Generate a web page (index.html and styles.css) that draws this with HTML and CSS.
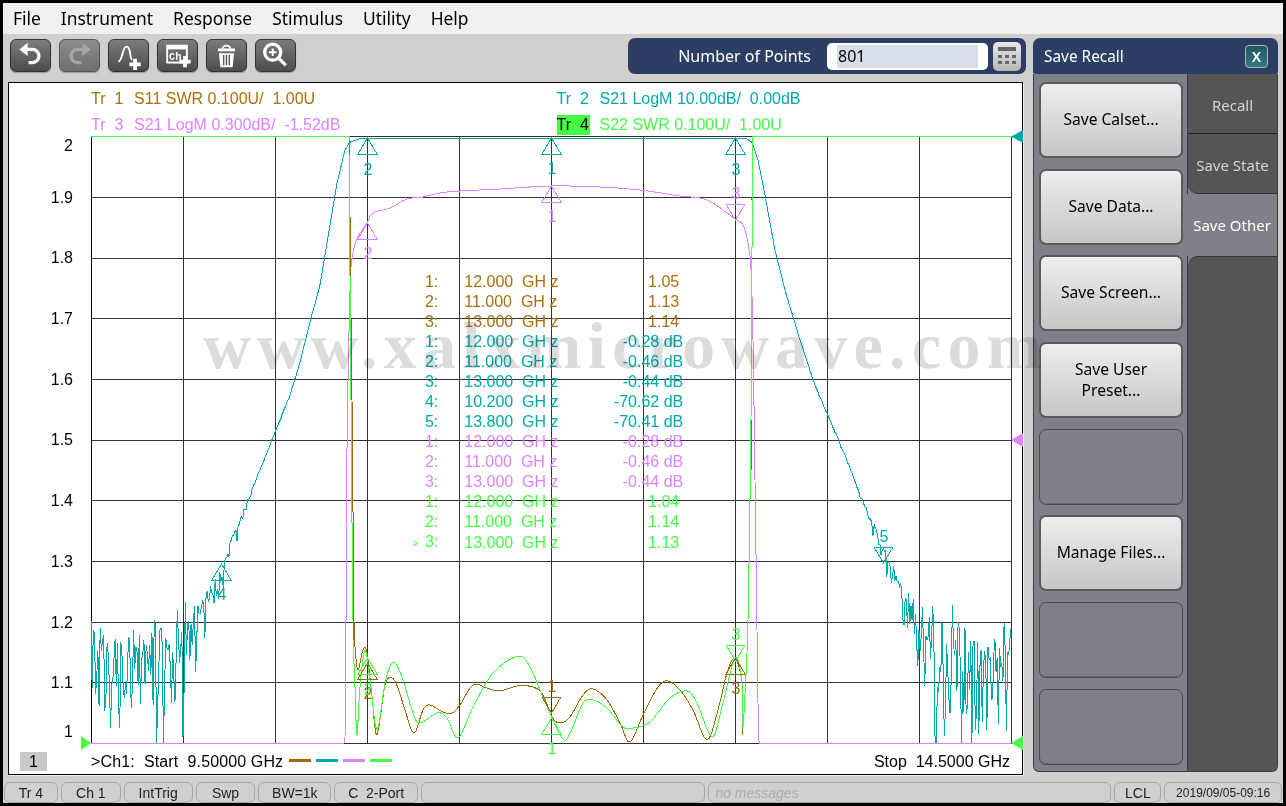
FILE: index.html
```html
<!DOCTYPE html>
<html lang="en">
<head>
    <meta charset="UTF-8">
    <title>Network Analyzer</title>
    <link rel="stylesheet" href="styles.css">
</head>
<body>
    <div class="app">
        <div class="menu">
            <span>File</span>
            <span>Instrument</span>
            <span>Response</span>
            <span>Stimulus</span>
            <span>Utility</span>
            <span>Help</span>
        </div>

        <div class="main">
            <div class="left">
                <div class="toolbar">
                    <div class="tools">
                        <button class="tool">
                            <svg viewBox="0 0 40 33"><path d="M15 10h7a6.5 6.5 0 0 1 0 14h-4" class="ico-line"/><path d="M17 3v14l-9-7z" class="ico-fill"/></svg>
                        </button>
                        <button class="tool off">
                            <svg viewBox="0 0 40 33"><path d="M25 10h-7a6.5 6.5 0 0 0 0 14h4" class="ico-line"/><path d="M23 3v14l9-7z" class="ico-fill"/></svg>
                        </button>
                        <button class="tool">
                            <svg viewBox="0 0 40 33"><path d="M9 23c5 0 4-16 9-16s3 14 6 14" class="ico-thin"/><path d="M25 20h4v4h4v4h-4v4h-4v-4h-4v-4h4z" class="ico-fill"/></svg>
                        </button>
                        <button class="tool">
                            <svg viewBox="0 0 40 33"><path d="M9 6h21v18H9z" class="ico-thin"/><path d="M9 6h21v4H9z" class="ico-fill"/><text x="11" y="21" class="ico-text">Ch</text><path d="M26 17h4v4h4v4h-4v4h-4v-4h-4v-4h4z" class="ico-fill"/></svg>
                        </button>
                        <button class="tool">
                            <svg viewBox="0 0 40 33"><path d="M11 9h18v3H11z" class="ico-fill"/><path d="M16 9a4 3 0 0 1 8 0" class="ico-thin"/><path d="M12 14h16l-1.5 15h-13z" class="ico-fill"/><path d="M17 16v11M20 16v11M23 16v11" class="ico-dark"/></svg>
                        </button>
                        <button class="tool">
                            <svg viewBox="0 0 40 33"><circle cx="17" cy="13" r="8.5" class="ico-line"/><path d="M13 13h8M17 9v8" class="ico-thin"/><path d="M23 19l8 8" class="ico-line"/></svg>
                        </button>
                    </div>
                    <div class="entry">
                        <span class="entry-label">Number of Points</span>
                        <div class="entry-box"><span class="entry-value">801</span></div>
                        <button class="calc">
                            <svg viewBox="0 0 28 29"><path d="M5 5h18v4H5z" class="key-bar"/><path d="M5 13h4v3H5zM12 13h4v3h-4zM19 13h4v3h-4zM5 19h4v3H5zM12 19h4v3h-4zM19 19h4v3h-4z" class="key-bar"/></svg>
                        </button>
                    </div>
                </div>

                <div class="plot">
                    <div class="legend">
                        <div class="legend-row">
                            <span class="legend-cell brown"><span class="tr">Tr&nbsp;&nbsp;1</span>S11 SWR 0.100U/&nbsp;&nbsp;1.00U</span>
                            <span class="legend-cell teal"><span class="tr">Tr&nbsp;&nbsp;2</span>S21 LogM 10.00dB/&nbsp;&nbsp;0.00dB</span>
                        </div>
                        <div class="legend-row">
                            <span class="legend-cell pink"><span class="tr">Tr&nbsp;&nbsp;3</span>S21 LogM 0.300dB/&nbsp;&nbsp;-1.52dB</span>
                            <span class="legend-cell green"><span class="tr active">Tr&nbsp;&nbsp;4</span>S22 SWR 0.100U/&nbsp;&nbsp;1.00U</span>
                        </div>
                    </div>

                    <svg id="chart" class="chart" viewBox="9 135 1013 615"></svg>

                    <table class="markers">
                        <tr class="brown"><td>1:</td><td>12.000&nbsp;&nbsp;GH z</td><td class="plain">1.05</td></tr>
                        <tr class="brown"><td>2:</td><td>11.000&nbsp;&nbsp;GH z</td><td class="plain">1.13</td></tr>
                        <tr class="brown"><td>3:</td><td>13.000&nbsp;&nbsp;GH z</td><td class="plain">1.14</td></tr>
                        <tr class="teal"><td>1:</td><td>12.000&nbsp;&nbsp;GH z</td><td>-0.28 dB</td></tr>
                        <tr class="teal"><td>2:</td><td>11.000&nbsp;&nbsp;GH z</td><td>-0.46 dB</td></tr>
                        <tr class="teal"><td>3:</td><td>13.000&nbsp;&nbsp;GH z</td><td>-0.44 dB</td></tr>
                        <tr class="teal"><td>4:</td><td>10.200&nbsp;&nbsp;GH z</td><td>-70.62 dB</td></tr>
                        <tr class="teal"><td>5:</td><td>13.800&nbsp;&nbsp;GH z</td><td>-70.41 dB</td></tr>
                        <tr class="pink"><td>1:</td><td>12.000&nbsp;&nbsp;GH z</td><td>-0.28 dB</td></tr>
                        <tr class="pink"><td>2:</td><td>11.000&nbsp;&nbsp;GH z</td><td>-0.46 dB</td></tr>
                        <tr class="pink"><td>3:</td><td>13.000&nbsp;&nbsp;GH z</td><td>-0.44 dB</td></tr>
                        <tr class="green"><td>1:</td><td>12.000&nbsp;&nbsp;GH z</td><td class="plain">1.04</td></tr>
                        <tr class="green"><td>2:</td><td>11.000&nbsp;&nbsp;GH z</td><td class="plain">1.14</td></tr>
                        <tr class="green"><td><small>&gt;</small> 3:</td><td>13.000&nbsp;&nbsp;GH z</td><td class="plain">1.13</td></tr>
                    </table>

                    <div class="plot-foot">
                        <span class="ch-num">1</span>
                        <span class="start">&gt;Ch1:&nbsp;&nbsp;Start&nbsp;&nbsp;9.50000 GHz</span>
                        <span class="dashes">
                            <i class="dash bg-brown"></i>
                            <i class="dash bg-teal"></i>
                            <i class="dash bg-pink"></i>
                            <i class="dash bg-green"></i>
                        </span>
                        <span class="stop">Stop&nbsp;&nbsp;14.5000 GHz</span>
                    </div>
                </div>
            </div>

            <div class="side">
                <div class="side-title">
                    <span>Save Recall</span>
                    <button class="close">X</button>
                </div>
                <div class="side-body">
                    <div class="softkeys">
                        <button class="key">Save Calset...</button>
                        <button class="key">Save Data...</button>
                        <button class="key">Save Screen...</button>
                        <button class="key">Save User<br>Preset...</button>
                        <button class="key blank"></button>
                        <button class="key">Manage Files...</button>
                        <button class="key blank"></button>
                        <button class="key blank"></button>
                    </div>
                    <div class="tabs">
                        <div class="tab first">Recall</div>
                        <div class="tab before-active">Save State</div>
                        <div class="tab active">Save Other</div>
                        <div class="tab rest"></div>
                    </div>
                </div>
            </div>
        </div>

        <div class="status">
            <span class="st st-tr">Tr 4</span>
            <span class="st st-ch">Ch 1</span>
            <span class="st st-trig">IntTrig</span>
            <span class="st st-swp">Swp</span>
            <span class="st st-bw">BW=1k</span>
            <span class="st st-port">C&nbsp;&nbsp;2-Port</span>
            <span class="st st-blank"></span>
            <span class="st st-msg">no messages</span>
            <span class="st st-lcl">LCL</span>
            <span class="st st-date">2019/09/05-09:16</span>
        </div>

        <div class="watermark">www.xalxmicrowave.com</div>
    </div>

    <script src="chart.js"></script>
</body>
</html>
```

FILE: styles.css
```css
* {
    box-sizing: border-box;
}

body {
    margin: 0;
    background: #000;
    font-family: 'Liberation Sans', sans-serif;
    overflow: hidden;
}

.app {
    position: relative;
    width: 1280px;
    height: 800px;
    margin: 3px;
    background: #d0d0d0;
    display: flex;
    flex-direction: column;
}

/* Menu */
.menu {
    height: 31px;
    padding: 0 0 2px 10px;
    background: #f0f0f0;
    display: flex;
    align-items: center;
    gap: 20px;
    font-family: 'Noto Sans', sans-serif;
    font-size: 17.4px;
    color: #000;
}

.main {
    flex: 1;
    display: flex;
    min-height: 0;
}

.left {
    width: 1030px;
    padding: 4px 0 0 5px;
}

/* Toolbar */
.toolbar {
    display: flex;
    justify-content: space-between;
    height: 36px;
    margin-bottom: 8px;
    padding-right: 7px;
}

.tools {
    display: flex;
    gap: 8px;
    padding: 1px 0 2px 2px;
}

.tool {
    width: 41px;
    padding: 0;
    border: 1px solid #333;
    border-radius: 6px;
    background: linear-gradient(#7c7c7c, #4c4c4c);
    box-shadow: 0 1px 1px #999;
}

.tool svg {
    display: block;
    width: 39px;
    height: 31px;
}

.tool.off {
    background: linear-gradient(#8c8c8c, #6e6e6e);
    border-color: #555;
}

.ico-line {
    fill: none;
    stroke: #fff;
    stroke-width: 3.5;
}

.ico-thin {
    fill: none;
    stroke: #fff;
    stroke-width: 2;
}

.ico-fill {
    fill: #fff;
}

.ico-dark {
    fill: none;
    stroke: #555;
    stroke-width: 1.5;
}

.ico-text {
    fill: #fff;
    font-family: 'Liberation Mono', monospace;
    font-size: 11px;
    font-weight: bold;
}

.off .ico-line {
    stroke: #a6a6a6;
}

.off .ico-fill {
    fill: #a6a6a6;
}

.entry {
    width: 398px;
    background: #2c3e63;
    border-radius: 7px;
    display: flex;
    align-items: center;
    padding-right: 4px;
}

.entry-label {
    width: 199px;
    padding-right: 16px;
    text-align: right;
    color: #fff;
    font-family: 'Noto Sans', sans-serif;
    font-size: 16px;
    white-space: nowrap;
}

.entry-box {
    width: 161px;
    height: 27px;
    margin-right: 5px;
    padding: 2px 10px;
    background: #fff;
    border-radius: 5px;
}

.entry-value {
    display: block;
    height: 23px;
    line-height: 23px;
    padding-left: 1px;
    background: #d8dee9;
    font-family: 'Noto Sans', sans-serif;
    font-size: 16px;
}

.calc {
    width: 28px;
    height: 29px;
    padding: 0;
    border: 0;
    border-radius: 5px;
    background: linear-gradient(#e8e8e8, #b8b8b8);
}

.calc svg {
    display: block;
}

.key-bar {
    fill: #666;
}

/* Plot */
.plot {
    position: relative;
    width: 1015px;
    height: 693px;
    background: #fff;
    border: 1px solid #000;
    box-shadow: 1px 1px 0 #eee;
}

.legend {
    height: 52px;
    padding: 3px 0 0 82px;
    font-size: 16px;
}

.legend-row {
    display: flex;
    height: 26px;
    align-items: center;
}

.legend-cell {
    width: 466px;
    white-space: nowrap;
}

.tr {
    display: inline-block;
    width: 43px;
}

.legend-cell .tr.active {
    width: 33px;
    margin-right: 10px;
    background: #44ff44;
    color: #000;
    line-height: 20px;
}

.brown { color: #a8700c; }
.teal { color: #00a9a9; }
.pink { color: #de82ff; }
.green { color: #44ff44; }
.bg-brown { background: #a06800; }
.bg-teal { background: #00a9a9; }
.bg-pink { background: #de82ff; }
.bg-green { background: #44ff44; }

.chart {
    display: block;
    width: 1013px;
    height: 615px;
    overflow: visible;
}

.chart text {
    font-family: 'Liberation Sans', sans-serif;
    font-size: 16px;
}

.markers {
    position: absolute;
    left: 403px;
    top: 189px;
    border-collapse: collapse;
    font-size: 16px;
    white-space: nowrap;
}

.markers td {
    height: 20px;
    padding: 0;
    line-height: 20px;
}

.markers td:nth-child(1) {
    width: 26px;
    text-align: right;
}

.markers td:nth-child(2) {
    width: 140px;
    padding-left: 26px;
}

.markers td:nth-child(3) {
    width: 105px;
    text-align: right;
}

.markers td.plain {
    padding-right: 4px;
}

.markers small {
    font-size: 11px;
    margin-right: 2px;
}

.plot-foot {
    position: relative;
    height: 24px;
    font-size: 16px;
    display: flex;
    align-items: center;
    color: #000;
}

.ch-num {
    width: 27px;
    height: 19px;
    margin-left: 11px;
    margin-top: -2px;
    background: #c8c8c8;
    text-align: center;
    line-height: 19px;
}

.start {
    margin-left: 44px;
    letter-spacing: 0.13px;
}

.dashes {
    display: flex;
    gap: 5px;
    margin-left: 6px;
    margin-top: -3px;
}

.dash {
    display: block;
    width: 22px;
    height: 3px;
}

.stop {
    margin-left: auto;
    margin-right: 12px;
}

/* Side panel */
.side {
    width: 245px;
    height: 734px;
    margin-top: 4px;
    display: flex;
    flex-direction: column;
}

.side-title {
    height: 36px;
    background: #2c3e63;
    border-radius: 7px 7px 2px 2px;
    display: flex;
    align-items: center;
    justify-content: space-between;
    padding: 1px 10px 0 11px;
    color: #fff;
    font-family: 'Noto Sans', sans-serif;
    font-size: 15.4px;
}

.close {
    width: 23px;
    height: 23px;
    padding: 0;
    border: 1px solid #aeb8c0;
    border-radius: 4px;
    background: linear-gradient(#1f5a64, #35797f);
    color: #fff;
    font-family: 'Liberation Sans', sans-serif;
    font-size: 14px;
    font-weight: bold;
}

.side-body {
    flex: 1;
    display: flex;
    background: #80808a;
    border: 1px solid #3c3c3c;
    border-top: 0;
    border-radius: 0 0 6px 6px;
    overflow: hidden;
}

.softkeys {
    width: 153px;
    padding: 8px 4px 0 5px;
    display: flex;
    flex-direction: column;
    gap: 10.7px;
}

.key {
    height: 76px;
    padding: 0 0 1px;
    border: 2px solid #5a5a5a;
    border-radius: 7px;
    background: linear-gradient(#eeeef0, #c6c6c9);
    color: #000;
    font-family: 'Noto Sans', sans-serif;
    font-size: 15.6px;
    line-height: 21px;
}

.key.blank {
    background: #80808a;
    border-color: #4c4c4c;
    border-width: 1px;
    box-shadow: inset 0 -1px 0 #6c6c74;
}

.tabs {
    flex: 1;
    display: flex;
    flex-direction: column;
    border-left: 1px solid #3c3c3c;
    color: #d4d4d4;
    font-family: 'Noto Sans', sans-serif;
    font-size: 15px;
    text-align: center;
}

.tab {
    height: 60px;
    line-height: 62px;
    background: #555;
}

.tab.first {
    border-bottom: 1px solid #222;
}

.tab.before-active {
    border-bottom: 1px solid #333;
    border-bottom-left-radius: 10px;
}

.tab.active {
    margin-left: -1px;
    background: #80808a;
    color: #fff;
    height: 62px;
}

.tab.rest {
    flex: 1;
    border-top: 1px solid #333;
    border-top-left-radius: 10px;
}

/* Status bar */
.status {
    height: 25px;
    padding: 4px 1px 0;
    display: flex;
    gap: 3px;
    font-size: 14px;
}

.st {
    display: flex;
    align-items: center;
    justify-content: center;
    border: 1px solid #a8a8a8;
    border-radius: 6px;
    color: #222;
}

.st-tr { width: 54px; }
.st-ch { width: 60px; }
.st-trig { width: 69px; }
.st-swp { width: 60px; }
.st-bw { width: 73px; }
.st-port { width: 84px; }
.st-blank { width: 285px; }
.st-msg {
    width: 404px;
    justify-content: flex-start;
    padding-left: 6px;
    color: #aaa;
    font-style: italic;
}
.st-lcl { width: 47px; }
.st-date { width: 118px; font-size: 12px; }

.watermark {
    position: absolute;
    left: 200px;
    top: 305px;
    color: #dcdcdc;
    mix-blend-mode: multiply;
    font-family: 'Liberation Serif', serif;
    font-size: 66px;
    font-weight: bold;
    letter-spacing: 6.25px;
    white-space: nowrap;
    pointer-events: none;
}
```

FILE: chart.js
```js
// draws the grid, traces and markers. coordinates are page pixels
const BROWN = '#a06800', TEAL = '#00a9a9', PINK = '#de82ff', GREEN = '#44ff44';
const svg = document.getElementById('chart');
const NS = 'http://www.w3.org/2000/svg';

function add(tag, attrs, text) {
    const el = document.createElementNS(NS, tag);
    for (const k in attrs) el.setAttribute(k, attrs[k]);
    if (text) el.textContent = text;
    svg.appendChild(el);
    return el;
}

function line(x1, y1, x2, y2, color) {
    add('line', { x1, y1, x2, y2, stroke: color, 'shape-rendering': 'crispEdges' });
}

function poly(points, color) {
    add('polyline', {
        points: points.map(p => p.join(',')).join(' '),
        fill: 'none',
        stroke: color,
        'shape-rendering': 'crispEdges'
    });
}

// smooth a list of points into a denser one
function smooth(pts) {
    const out = [];
    for (let i = 0; i < pts.length - 1; i++) {
        const p0 = pts[Math.max(i - 1, 0)], p1 = pts[i], p2 = pts[i + 1], p3 = pts[Math.min(i + 2, pts.length - 1)];
        for (let t = 0; t < 1; t += 0.2) {
            const t2 = t * t, t3 = t2 * t;
            out.push([0, 1].map(a => 0.5 * (2 * p1[a] + (p2[a] - p0[a]) * t +
                (2 * p0[a] - 5 * p1[a] + 4 * p2[a] - p3[a]) * t2 +
                (3 * p1[a] - p0[a] - 3 * p2[a] + p3[a]) * t3)));
        }
    }
    out.push(pts[pts.length - 1]);
    return out;
}

function interp(pts, x) {
    for (let i = 0; i < pts.length - 1; i++) {
        if (x <= pts[i + 1][0]) {
            const f = (x - pts[i][0]) / (pts[i + 1][0] - pts[i][0]);
            return pts[i][1] + f * (pts[i + 1][1] - pts[i][1]);
        }
    }
    return pts[pts.length - 1][1];
}

let seed = 71;
function rnd() {
    seed = (seed * 16807) % 2147483647;
    return seed / 2147483647;
}

// log trace: the dips reach further than the peaks, a few go very deep
function noise() {
    const n = (rnd() + rnd() - 1) * 2;
    if (rnd() < 0.05) return 2 + rnd() * 3;
    return n > 0 ? n * 1.9 : n;
}

// grid
const gridX = [91, 183, 275, 367, 459, 551, 643, 735, 827, 919, 1011];
const gridY = [136, 197, 258, 318, 379, 440, 500, 561, 622, 682, 743];
gridX.forEach(x => line(x + 0.5, 136, x + 0.5, 743, '#333'));
gridY.forEach(y => line(91, y + 0.5, 1012, y + 0.5, '#333'));
line(91.5, 136, 91.5, 743, '#000');

// y axis
const yLabels = ['2', '1.9', '1.8', '1.7', '1.6', '1.5', '1.4', '1.3', '1.2', '1.1', '1'];
const yLabelBase = [151, 203, 263, 324, 385, 445, 506, 567, 628, 688, 737];
yLabels.forEach((t, i) => {
    add('text', { x: 73, y: yLabelBase[i], 'text-anchor': 'end', fill: '#000' }, t);
});

// S21 wide, teal
const tealMid = [[91, 652], [130, 655], [175, 650], [195, 622], [212, 592], [222, 568], [240, 520], [260, 470],
    [275, 432], [290, 395], [300, 362], [310, 322], [320, 285], [330, 225], [337, 183], [345, 150], [350, 142],
    [362, 138], [745, 138], [752, 142], [758, 160], [765, 195], [775, 250], [785, 290], [800, 340], [815, 385],
    [830, 420], [845, 455], [860, 495], [875, 530], [884, 553], [897, 585], [915, 620], [935, 650], [1011, 665]];
const tealAmp = [[91, 24], [175, 26], [195, 12], [222, 6], [240, 2], [260, 0.5], [350, 0], [750, 0], [860, 0.5],
    [875, 2.5], [890, 6], [915, 12], [940, 26], [1011, 26]];
const teal = [];
for (let x = 91; x <= 1011; x += 1.15) {
    const y = interp(tealMid, x) + noise() * interp(tealAmp, x);
    teal.push([x, Math.min(743, y)]);
}
poly(teal, TEAL);

// S21 zoomed, pink
poly(smooth([[345.5, 680], [346, 623], [347, 450], [350, 290], [353, 253],
    [358, 237], [367, 223], [373, 213], [390, 208], [407, 199], [423, 197], [440, 193], [460, 191], [500, 189],
    [551, 186], [600, 187], [640, 190], [680, 196], [700, 198], [713, 203], [727, 213], [735, 219], [743, 225],
    [748, 243], [751, 270], [753, 340], [755, 480], [757, 630]]), PINK);
poly([[91, 743.5], [344, 743.5], [345, 738], [345.5, 680]], PINK);
poly([[757, 630], [758.5, 738], [759.5, 743.5], [1011, 743.5]], PINK);

// S11, brown
const brown = [[349, 140], [350, 240], [352, 400], [354, 620], [355, 647], [358, 670], [363, 650], [367, 653], [372, 697],
    [377, 735], [385, 685], [392, 678], [398, 688], [405, 710], [414, 733], [423, 710], [430, 705], [443, 712],
    [452, 713], [460, 705], [473, 685], [487, 688], [500, 691], [517, 686], [533, 687], [543, 695], [552, 717],
    [560, 723], [570, 717], [583, 695], [593, 689], [607, 700], [620, 723], [630, 742], [643, 715], [658, 687],
    [668, 681], [680, 690], [693, 710], [707, 740], [718, 710], [727, 673], [735, 658], [742, 683], [743, 735]];
poly(smooth(brown), BROWN);

// S22, green
const green = [[349.5, 136.5], [349.5, 200], [351, 400], [353, 620], [355, 687], [357, 735], [360, 687], [365, 650],
    [370, 680], [377, 730], [385, 683], [393, 662], [402, 677], [413, 713], [420, 723], [437, 713], [447, 718],
    [458, 738], [473, 707], [493, 673], [518, 656], [530, 667], [543, 697], [562, 738], [570, 733], [583, 703],
    [593, 700], [607, 708], [623, 727], [633, 728], [650, 722], [670, 698], [687, 691], [697, 703], [712, 737],
    [722, 707], [735, 658], [742, 683], [743, 727], [747, 653], [748, 620], [751, 420], [752.5, 137]];
poly(smooth(green), GREEN);
line(91, 136.5, 350, 136.5, GREEN);
line(752, 136.5, 1012, 136.5, GREEN);

// brown showing through the green on the skirts
[[349.5, 140, 349.5, 155], [350.5, 217, 350.5, 245], [353.5, 600, 353.5, 640], [751.5, 197, 751.5, 200], [751.5, 420, 751.5, 470]]
    .forEach(s => line(s[0], s[1], s[2], s[3], BROWN));

// markers: x, apex y, up or down, label y, label
function marker(x, y, up, labelY, label, color) {
    const d = up ? 16 : -16;
    add('polygon', {
        points: `${x + 0.5},${y} ${x - 9},${y + d} ${x + 10},${y + d}`,
        fill: 'none',
        stroke: color,
        'shape-rendering': 'crispEdges'
    });
    add('text', { x: x + 1, y: labelY, 'text-anchor': 'middle', fill: color }, label);
}

marker(367, 138, true, 175, '2', TEAL);
marker(551, 138, true, 174, '1', TEAL);
marker(735, 138, true, 175, '3', TEAL);
marker(367, 223, true, 259, '2', PINK);
marker(551, 186, true, 222, '1', PINK);
marker(735, 220, false, 199, '3', PINK);
marker(221, 564, true, 600, '4', TEAL);
marker(883, 563, false, 542, '5', TEAL);
marker(367, 663, true, 699, '2', BROWN);
marker(367, 658, true, 695, '2', GREEN);
marker(551, 713, false, 692, '1', BROWN);
marker(551, 718, true, 754, '1', GREEN);
marker(735, 661, false, 640, '3', GREEN);
marker(735, 658, true, 694, '3', BROWN);

// stimulus and scale handles
function handle(points, color) {
    add('polygon', { points, fill: color });
}
handle('1023,130 1011,136.5 1023,143', TEAL);
handle('1023,433 1011,440 1023,447', PINK);
handle('1023,736 1011,743 1023,750', GREEN);
handle('81,736 91,743 81,750', GREEN);
```
